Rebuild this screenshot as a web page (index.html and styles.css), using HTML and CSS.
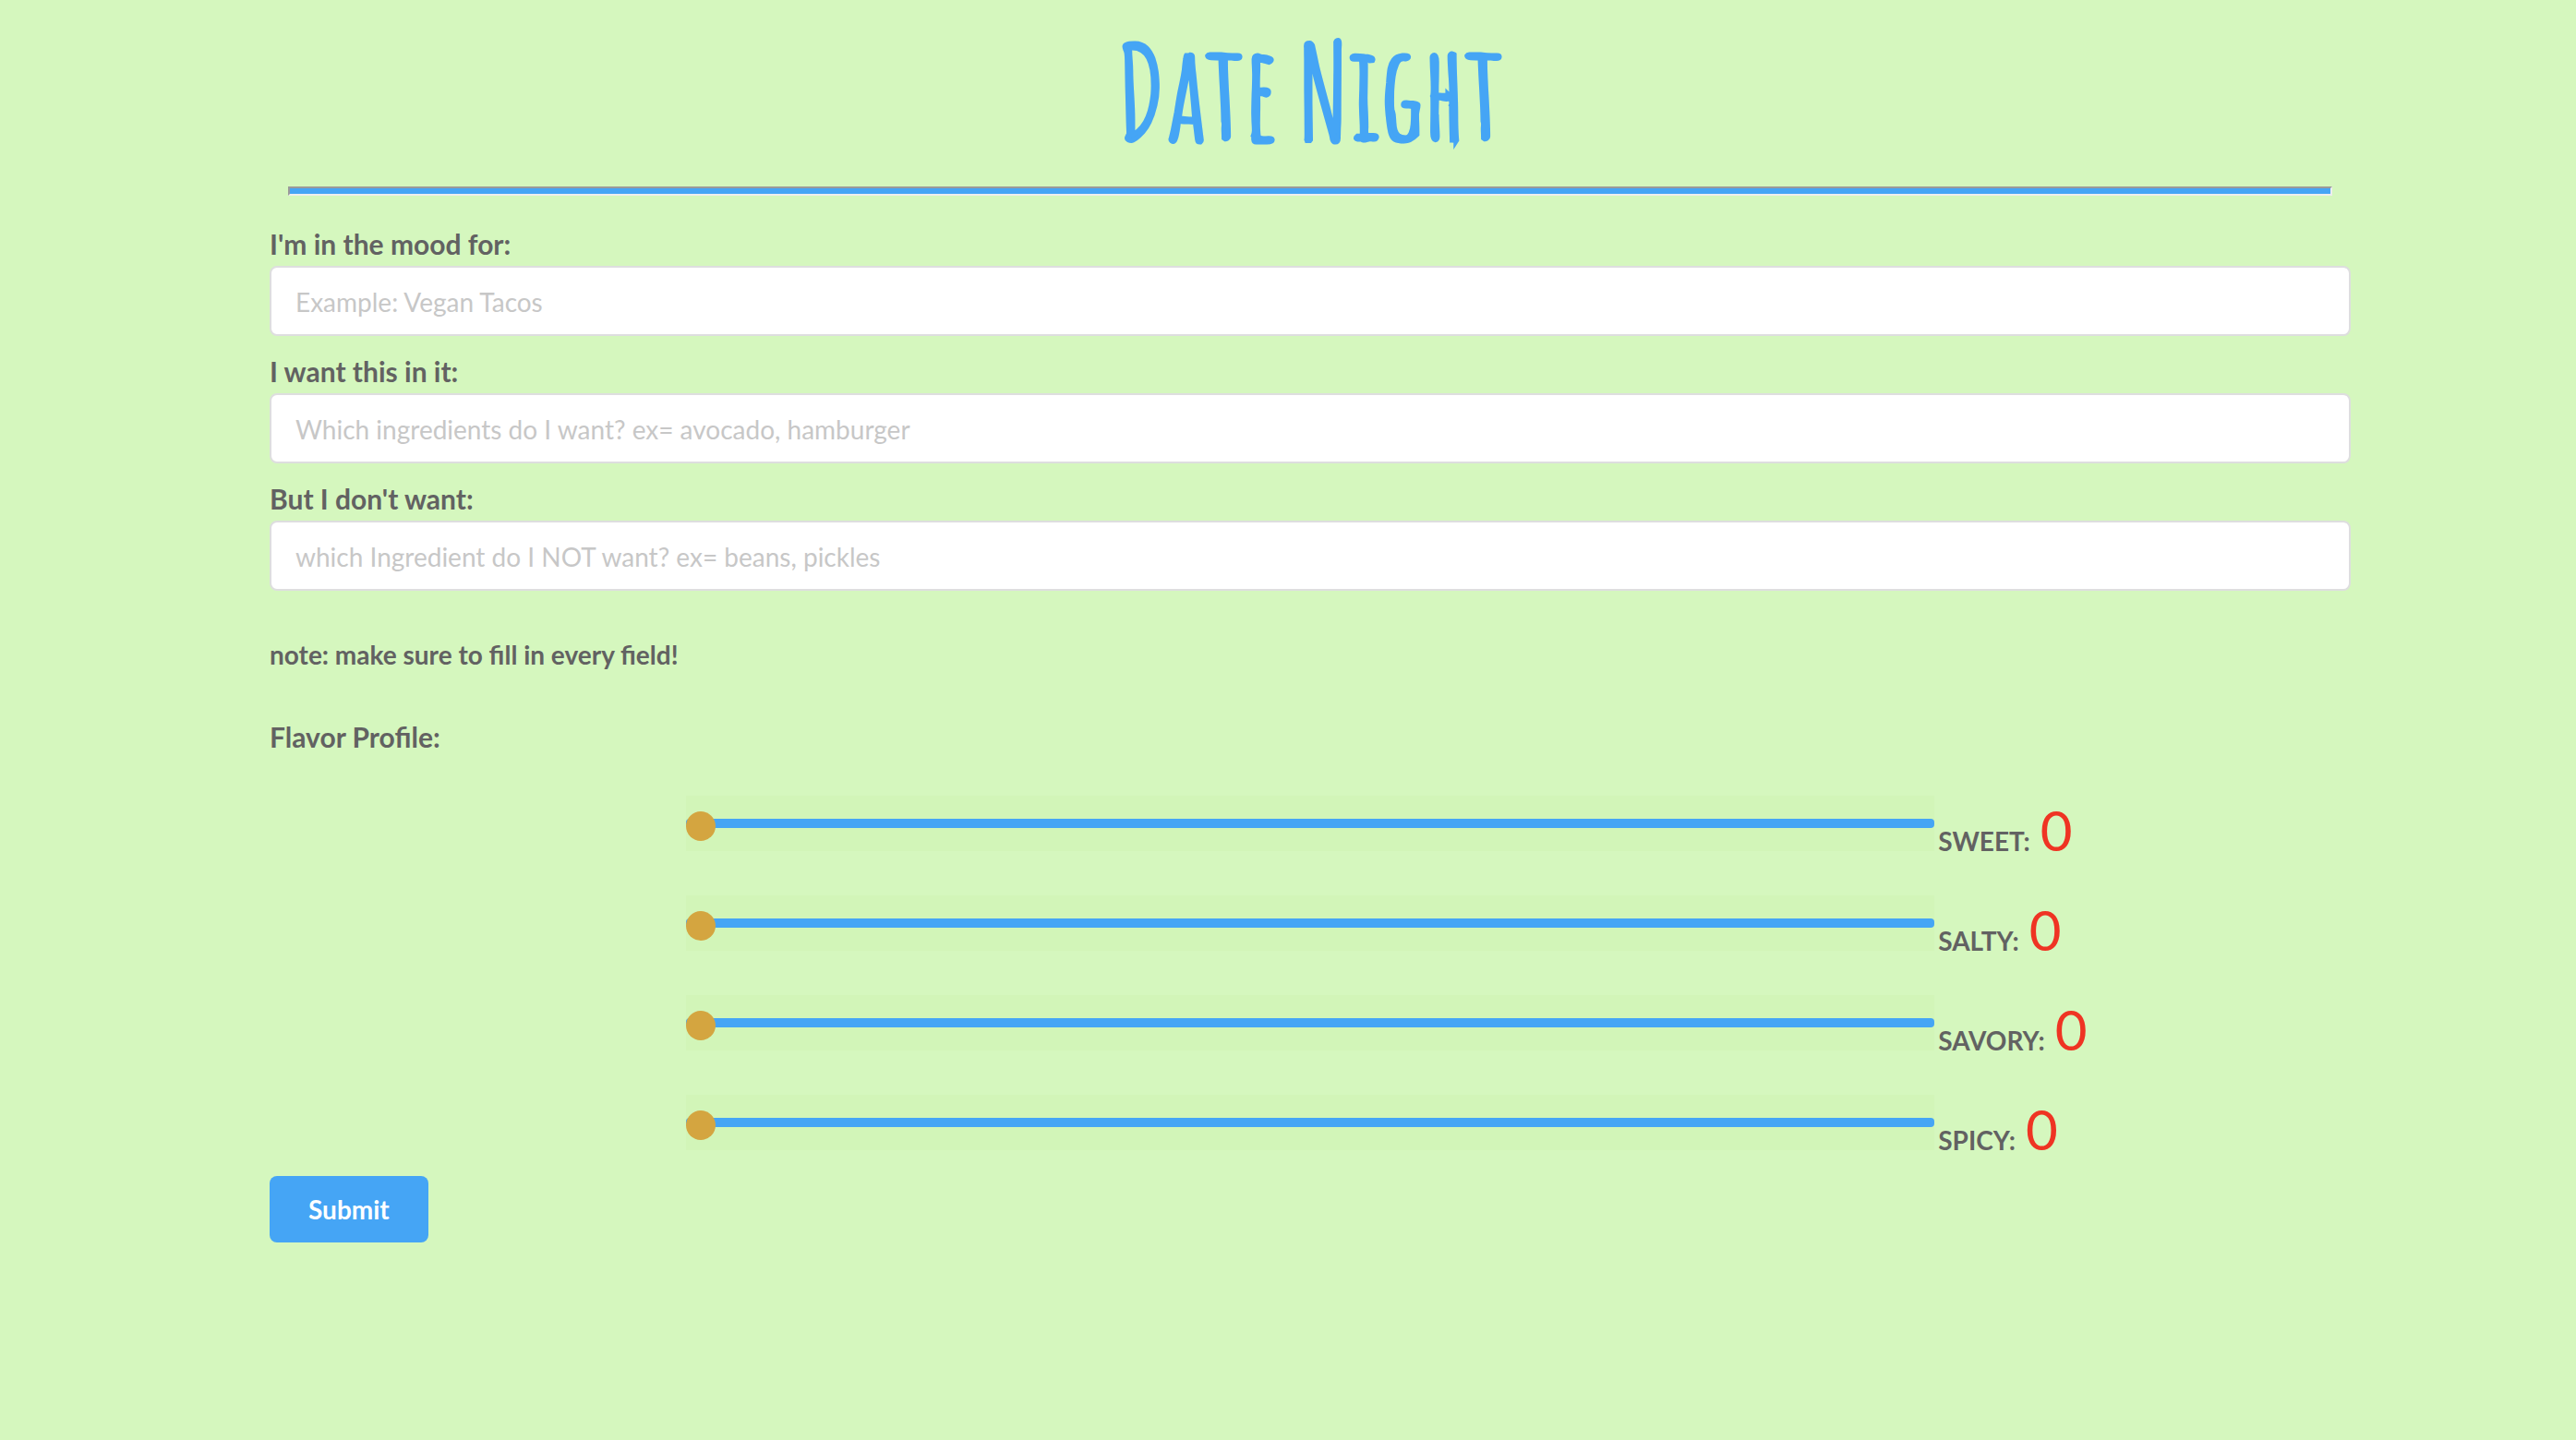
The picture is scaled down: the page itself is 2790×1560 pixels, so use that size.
FILE: index.html
```html
<!DOCTYPE html>
<html lang="en">
<head>
<meta charset="utf-8">
<title>Date Night</title>
<meta name="viewport" content="width=device-width, initial-scale=1">
<link rel="stylesheet" href="styles.css">
</head>
<body>
<main class="page">
  <h1 class="title">Date Night</h1>
  <hr class="rule">
  <form class="form">
    <div class="field">
      <label class="label" for="mood">I'm in the mood for:</label>
      <input class="input" id="mood" type="text" placeholder="Example: Vegan Tacos">
    </div>
    <div class="field">
      <label class="label" for="want">I want this in it:</label>
      <input class="input" id="want" type="text" placeholder="Which ingredients do I want? ex= avocado, hamburger">
    </div>
    <div class="field">
      <label class="label" for="avoid">But I don't want:</label>
      <input class="input" id="avoid" type="text" placeholder="which Ingredient do I NOT want? ex= beans, pickles">
    </div>
    <p class="note">note: make sure to fill in every field!</p>
    <fieldset class="flavors">
      <legend class="legend">Flavor Profile:</legend>
      <div class="flavor">
        <input class="slider" id="sweet" type="range" min="0" max="10" value="0">
        <label class="flavor-name" for="sweet">SWEET:</label>
        <output class="value" for="sweet">0</output>
      </div>
      <div class="flavor">
        <input class="slider" id="salty" type="range" min="0" max="10" value="0">
        <label class="flavor-name" for="salty">SALTY:</label>
        <output class="value" for="salty">0</output>
      </div>
      <div class="flavor">
        <input class="slider" id="savory" type="range" min="0" max="10" value="0">
        <label class="flavor-name" for="savory">SAVORY:</label>
        <output class="value" for="savory">0</output>
      </div>
      <div class="flavor">
        <input class="slider" id="spicy" type="range" min="0" max="10" value="0">
        <label class="flavor-name" for="spicy">SPICY:</label>
        <output class="value" for="spicy">0</output>
      </div>
    </fieldset>
    <button class="submit" type="submit">Submit</button>
  </form>
</main>
</body>
</html>
```
FILE: styles.css
```css
* {
  box-sizing: border-box;
}

body {
  margin: 0;
  background: #d5f7be;
  color: #626262;
  font-family: Lato, "Liberation Sans", sans-serif;
  font-size: 28px;
  line-height: 40px;
}

.page {
  padding: 18px 244px 40px 292px;
}

.title {
  margin: 0;
  color: #45a5f5;
  font-family: "Amatic SC", "Liberation Sans Narrow", sans-serif;
  font-size: 140px;
  font-weight: 400;
  line-height: 160px;
  text-align: center;
  -webkit-text-stroke: 5px #45a5f5;
}

.rule {
  height: 10px;
  margin: 24px 20px 32px;
  border: 2px solid;
  border-color: #9a9a9a #eeeeee #eeeeee #9a9a9a;
  background: #45a5f5;
}

.field {
  margin-bottom: 18px;
}

.label {
  display: block;
  margin-bottom: 4px;
  font-size: 30px;
  font-weight: 700;
  line-height: 40px;
}

.input {
  display: block;
  width: 100%;
  height: 76px;
  padding: 2px 26px 0;
  border: 2px solid #dededf;
  border-radius: 8px;
  background: #ffffff;
  color: #626262;
  font: inherit;
}

.input::placeholder {
  color: #c7c7c7;
  opacity: 1;
}

.note {
  margin: 49px 0;
  font-weight: 700;
}

.flavors {
  margin: 0;
  padding: 0;
  border: 0;
}

.legend {
  margin-bottom: 44px;
  padding: 0;
  font-size: 30px;
  font-weight: 700;
}

.flavor {
  display: flex;
  align-items: baseline;
  height: 108px;
  padding-left: 20%;
}

.flavor:last-child {
  height: 88px;
}

.slider {
  appearance: none;
  width: 75%;
  height: 60px;
  margin: 0 4px 0 0;
  background: #d2f5b8;
}

.slider::-webkit-slider-runnable-track {
  height: 10px;
  border-radius: 4px;
  background: #45a5f5;
}

.slider::-webkit-slider-thumb {
  appearance: none;
  width: 32px;
  height: 32px;
  margin-top: -8px;
  border-radius: 50%;
  background: #d4a540;
}

.flavor-name {
  margin-right: 11px;
  font-weight: 700;
}

.value {
  color: #ef3423;
  font-size: 60px;
  line-height: 60px;
}

.submit {
  display: block;
  height: 72px;
  padding: 0 42px;
  border: 0;
  border-radius: 8px;
  background: #45a5f5;
  color: #ffffff;
  font: inherit;
  font-weight: 700;
}
```
